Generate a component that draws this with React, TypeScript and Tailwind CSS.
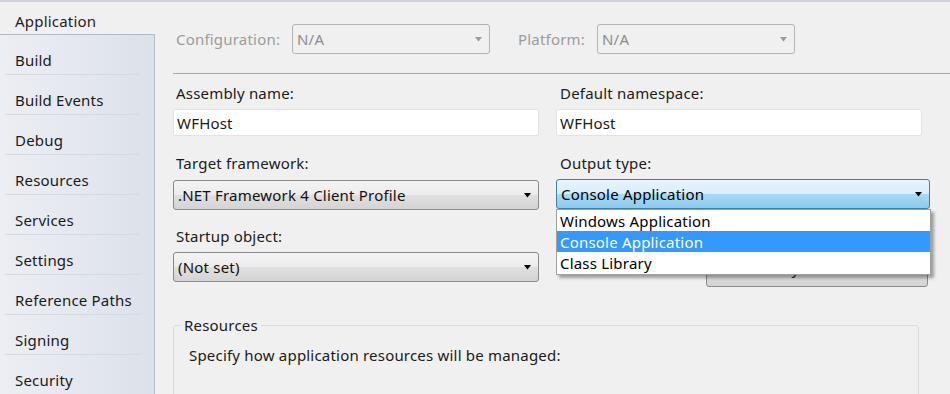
const tabs = ['Build', 'Build Events', 'Debug', 'Resources', 'Services', 'Settings', 'Reference Paths', 'Signing', 'Security'];

function Arrow({ className }: { className?: string }) {
  return (
    <svg width="8" height="5" viewBox="0 0 8 5" className={className}>
      <path d="M0 0 H7 L3.5 4.5 Z" fill="currentColor" />
    </svg>
  );
}

function DisabledCombo({ value }: { value: string }) {
  return (
    <div className="w-[198px] h-[30px] flex items-center justify-between pl-[4px] pr-[6px] border border-[#b4b4b4] rounded-[3px] text-[#8d8d8d]">
      <span>{value}</span>
      <Arrow className="text-[#9a9a9a]" />
    </div>
  );
}

function Combo({ value }: { value: string }) {
  return (
    <div className="h-[30px] flex items-center justify-between pl-[4px] pr-[6px] border border-[#8a8a8a] rounded-[3px] bg-[linear-gradient(to_bottom,#f4f4f4_0%,#ececec_50%,#e0e0e0_50%,#d4d4d4_100%)] text-[#111]">
      <span>{value}</span>
      <Arrow className="text-black" />
    </div>
  );
}

export default function App() {
  return (
    <div
      className="w-[950px] h-[394px] overflow-hidden flex bg-[#f0f0f0] border-t-2 border-[#cdd2db] text-[15px] leading-[20px] tracking-[0.2px] text-[#1a1a1a]"
      style={{ fontFamily: '"Noto Sans", "Open Sans", sans-serif' }}
    >
      <div className="w-[155px] flex flex-col shrink-0">
        <div className="h-[38px] flex items-center pt-[5px] pl-[15px] text-[#1e1e1e]">Application</div>
        <div className="flex-1 border-t border-r border-[#b3bbc8] bg-gradient-to-r from-[#eceef3] to-[#dce1ea]">
          {tabs.map((t, i) => (
            <div key={t}>
              {i > 0 && <div className="h-px ml-[5px] w-[135px] bg-[#d5d9e0]" />}
              <div className="h-[39px] flex items-center pt-[10px] pl-[15px]">{t}</div>
            </div>
          ))}
        </div>
      </div>

      <div className="flex-1 pl-[18px]">
        <div className="mt-[22px] h-[30px] flex items-center">
          <div className="w-[119px] pl-[3px] text-[#9c9c9c]">Configuration:</div>
          <DisabledCombo value="N/A" />
          <div className="ml-[28px] w-[79px] text-[#9c9c9c]">Platform:</div>
          <DisabledCombo value="N/A" />
        </div>

        <div className="mt-[19px] h-px bg-[#a8a8a8]" />

        <div className="flex gap-[17px]">
          <div className="w-[366px]">
            <div className="mt-[9px] pl-[3px]">Assembly name:</div>
            <div className="mt-[6px] h-[27px] flex items-center pl-[3px] bg-white border border-[#e2e3e6] rounded-[2px]">WFHost</div>
            <div className="mt-[17px] pl-[3px]">Target framework:</div>
            <div className="mt-[7px]">
              <Combo value=".NET Framework 4 Client Profile" />
            </div>
            <div className="mt-[16px] pl-[3px]">Startup object:</div>
            <div className="mt-[6px]">
              <Combo value="(Not set)" />
            </div>
          </div>

          <div className="w-[374px]">
            <div className="mt-[9px] pl-[4px]">Default namespace:</div>
            <div className="mt-[6px] w-[366px] h-[27px] flex items-center pl-[3px] bg-white border border-[#e2e3e6] rounded-[2px]">WFHost</div>
            <div className="mt-[17px] pl-[4px]">Output type:</div>
            <div className="relative mt-[6px]">
              <div className="h-[30px] flex items-center justify-between pl-[4px] pr-[6px] border border-[#3c7fb1] rounded-[3px] bg-[linear-gradient(to_bottom,#e8f5fc_0%,#d6eefb_50%,#a9daf5_50%,#8ccbec_100%)] text-black">
                <span>Console Application</span>
                <Arrow className="text-black" />
              </div>
              <div className="absolute left-0 top-full z-10 w-[375px] bg-white border border-[#a0a0a0] shadow-[3px_3px_3px_rgba(0,0,0,0.35)] text-black">
                <div className="h-[21px] flex items-center pl-[3px]">Windows Application</div>
                <div className="h-[21px] flex items-center pl-[3px] bg-[#3399ff] text-white">Console Application</div>
                <div className="h-[22px] flex items-center pl-[3px]">Class Library</div>
              </div>
            </div>
            <div className="mt-[48px] ml-[150px] w-[222px] h-[30px] flex items-center justify-center pb-[8px] border border-[#8a8a8a] rounded-[3px] bg-[linear-gradient(to_bottom,#f4f4f4_0%,#ececec_50%,#e0e0e0_50%,#d4d4d4_100%)]">
              Assembly Information...
            </div>
          </div>
        </div>

        <fieldset className="mt-[28px] w-[746px] h-[120px] border border-[#d5dde3] rounded-[3px] px-[7px]">
          <legend className="px-[3px]">Resources</legend>
          <div className="mt-[10px] pl-[8px]">Specify how application resources will be managed:</div>
        </fieldset>
      </div>
    </div>
  );
}
